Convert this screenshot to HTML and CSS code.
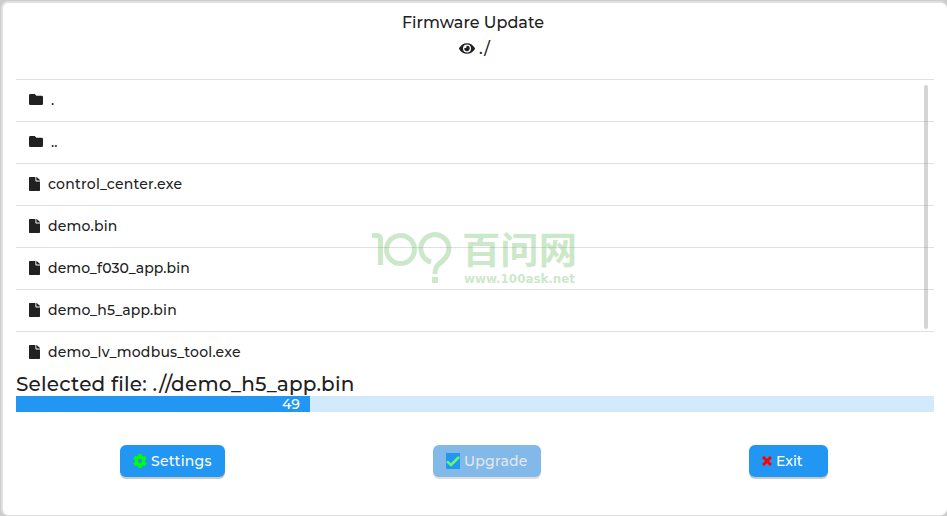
FILE: index.html
```html
<!DOCTYPE html>
<html lang="en">
<head>
<meta charset="utf-8">
<title>Firmware Update</title>
<link rel="stylesheet" href="styles.css">
</head>
<body>
<svg class="defs" width="0" height="0">
  <symbol id="folder" viewBox="0 0 512 384" preserveAspectRatio="none"><path d="M464 64H272L208 0H48A48 48 0 0 0 0 48v288a48 48 0 0 0 48 48h416a48 48 0 0 0 48-48V112a48 48 0 0 0-48-48z"/></symbol>
  <symbol id="file" viewBox="0 0 384 512" preserveAspectRatio="none"><path d="M224 136V0H24C11 0 0 11 0 24v464c0 13 11 24 24 24h336c13 0 24-11 24-24V160H248c-13 0-24-11-24-24zm160-14v6H256V0h6c6 0 12 3 17 7l98 98c4 5 7 11 7 17z"/></symbol>
</svg>
<main class="window">
  <header>
    <h1>Firmware Update</h1>
    <div class="path">
      <svg class="eye" viewBox="0 64 576 384"><path d="M572 241C518 136 411 64 288 64S58 136 4 241a32 32 0 0 0 0 29c54 106 161 178 284 178s230-72 284-177a32 32 0 0 0 0-30zM288 400a144 144 0 1 1 0-288 144 144 0 0 1 0 288zm0-240a95 95 0 0 0-25 4 48 48 0 0 1-67 67 96 96 0 1 0 92-71z"/></svg>
      <span>./</span>
    </div>
  </header>
  <section class="files">
    <ul>
      <li><svg class="folder"><use href="#folder"/></svg><span>.</span></li>
      <li><svg class="folder"><use href="#folder"/></svg><span>..</span></li>
      <li><svg class="file"><use href="#file"/></svg><span class="wide">control_center.exe</span></li>
      <li><svg class="file"><use href="#file"/></svg><span class="wide">demo.bin</span></li>
      <li><svg class="file"><use href="#file"/></svg><span class="snug">demo_f030_app.bin</span></li>
      <li><svg class="file"><use href="#file"/></svg><span>demo_h5_app.bin</span></li>
      <li><svg class="file"><use href="#file"/></svg><span class="wide">demo_lv_modbus_tool.exe</span></li>
    </ul>
    <div class="scrollbar"></div>
  </section>
  <p class="selected">Selected file: .//demo_h5_app.bin</p>
  <div class="progress"><div class="bar">49</div></div>
  <footer>
    <button class="btn settings"><svg viewBox="0 0 14 14"><path fill-rule="evenodd" d="M5.400 0h3.200l.4 2 1 .6 2-.7 1.600 2.800-1.500 1.400v1.800l1.500 1.400-1.600 2.800-2-.7-1 .6-.4 2H5.400L5 12l-1-.6-2 .7L.4 9.300l1.500-1.400V6.100L.4 4.700 2 1.900l2 .7 1-.6zM7 4.800a2.200 2.200 0 1 0 0 4.400 2.200 2.200 0 0 0 0-4.400z"/></svg><span>Settings</span></button>
    <button class="btn upgrade" disabled><i class="tick"><svg viewBox="0 0 14 16"><path d="M1 8.300 5 12 13 4"/></svg></i><span>Upgrade</span></button>
    <button class="btn exit"><svg viewBox="0 0 10 10"><path d="m1 1 8 8m0-8-8 8"/></svg><span>Exit</span></button>
  </footer>
  <svg class="watermark" viewBox="362 210 226 86" aria-label="100ask">
    <g fill="none" stroke="currentColor" stroke-width="5"><path d="M372 235.500h5q3.500 0 3.500 4V265"/><circle cx="400.500" cy="249.500" r="14"/><path d="M431 262A14 14 0 1 1 446 257Q444 260 439.500 263.500 435 267 435 274"/></g>
    <path d="M432 277h6v6h-6z"/>
    <text class="brand" x="462" y="264" textLength="115" lengthAdjust="spacingAndGlyphs">百问网</text>
    <text class="url" x="464" y="283" textLength="111" lengthAdjust="spacingAndGlyphs">www.100ask.net</text>
  </svg>
</main>
</body>
</html>
```
FILE: styles.css
```css
* { box-sizing: border-box; }
body {
  margin: 0;
  height: 516px;
  padding: 1px 0 0 1px;
  overflow: hidden;
  background: #cdcdcd;
  color: #212121;
  font: 500 14px "Montserrat", Inter, "Noto Sans CJK SC", sans-serif;
}
.defs { position: absolute; }
svg { display: block; fill: currentColor; flex: none; }
.window {
  position: relative;
  height: 515px;
  padding: 0 13px;
  border: 2px solid #e0e0e0;
  border-right-width: 0;
  border-bottom-width: 1px;
  border-radius: 7px;
  background: #fff;
}
header { height: 76px; padding: 10px 4px 0 0; text-align: center; }
h1 { margin: 0; font-size: 16px; font-weight: 500; line-height: 20px; }
.path { display: flex; justify-content: center; align-items: center; gap: 4px; height: 20px; margin: 5px 0 0 3px; font-size: 16px; }
.eye { width: 16px; height: 11px; }
.files { position: relative; height: 293px; overflow: hidden; }
ul { margin: 0; padding: 0; list-style: none; }
li { display: flex; align-items: center; gap: 8px; height: 42px; padding: 0 0 2px 13px; border-top: 1px solid #e0e0e0; }
li span { line-height: 18px; letter-spacing: .17px; }
li .wide { letter-spacing: .22px; }
li .snug { letter-spacing: .1px; }
.folder { width: 14px; height: 11px; }
.file { width: 11px; height: 14px; }
.scrollbar { position: absolute; right: 6px; top: 6px; width: 4px; height: 244px; border-radius: 2px; background: rgba(117,117,117,.3); }
.selected { margin: 0; height: 24px; font-size: 20px; line-height: 24px; letter-spacing: .2px; white-space: nowrap; }
.progress { height: 16px; background: #d3e9fc; }
.bar { width: 294px; height: 16px; padding-right: 10px; background: #2196f3; color: #fff; line-height: 16px; text-align: right; }
footer { display: flex; margin-top: 33px; padding-left: 104px; }
.btn { display: flex; align-items: center; gap: 4px; height: 32px; padding: 0 13px; border: 0; border-radius: 6px; background: #2196f3; box-shadow: 0 2px 0 #c9c9c9; color: #fff; font: inherit; letter-spacing: .25px; white-space: nowrap; }
.settings { width: 105px; }
.settings svg { width: 14px; height: 14px; color: #0f0; }
.upgrade { width: 108px; margin-left: 208px; background: #82b9e8; color: #e2e8ee; box-shadow: 0 2px 0 #dedede; }
.tick { width: 14px; height: 16px; background: #2196f3; color: #64fa70; }
.tick svg { fill: none; stroke: currentColor; stroke-width: 2.5; }
.exit { width: 79px; margin-left: 208px; letter-spacing: 0; }
.exit svg { width: 10px; height: 10px; fill: none; stroke: #f00; stroke-width: 3; }
.watermark { position: absolute; left: 359px; top: 207px; width: 226px; height: 86px; color: #43ae39; opacity: .27; }
.brand { font: 700 37px "Noto Sans CJK SC", sans-serif; }
.url { font: 700 12px "DejaVu Sans", sans-serif; }
```
